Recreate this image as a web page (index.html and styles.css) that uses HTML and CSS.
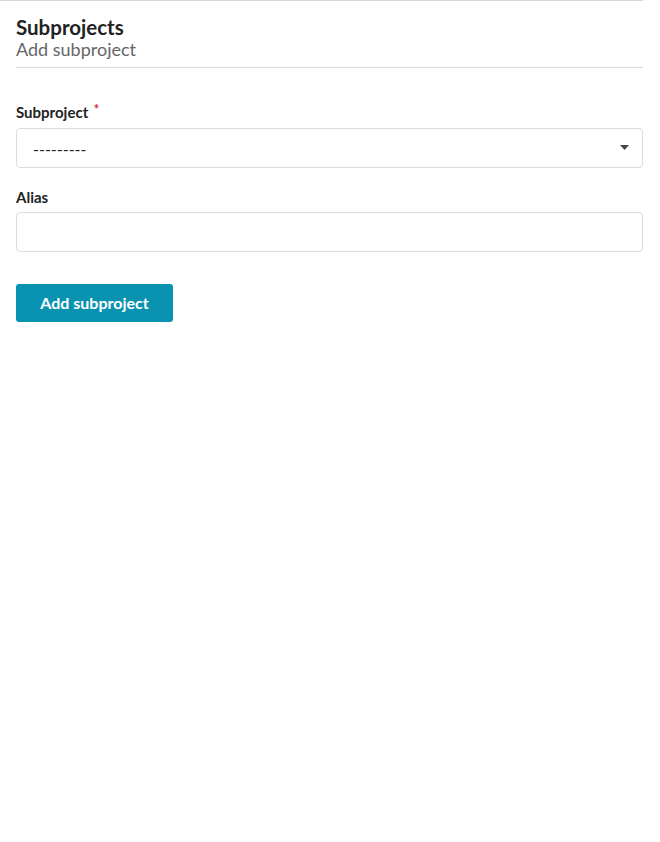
FILE: index.html
```html
<!DOCTYPE html>
<html>
<head>
<meta charset="utf-8">
<link rel="stylesheet" href="styles.css">
</head>
<body>
<div class="page">
  <div class="header">
    <h1 class="title">Subprojects</h1>
    <div class="subtitle">Add subproject</div>
  </div>
  <form class="form">
    <div class="field">
      <label class="label">Subproject <span class="req">*</span></label>
      <div class="select">
        <span class="select-text">---------</span>
        <svg class="caret" width="9" height="5" viewBox="0 0 9 5"><path d="M0 0H9L4.5 5Z" fill="#444"/></svg>
      </div>
    </div>
    <div class="field">
      <label class="label">Alias</label>
      <div class="input"></div>
    </div>
    <button type="button" class="btn">Add subproject</button>
  </form>
</div>
</body>
</html>
```
FILE: styles.css
```css
body {
  margin: 0;
  font-family: Lato, "Noto Sans", sans-serif;
  color: #222;
  background: #fff;
}
.page {
  width: 643px;
  border-top: 1px solid #d8d8d8;
  box-sizing: border-box;
  padding-left: 16px;
}
.header {
  padding-top: 15px;
  padding-bottom: 7px;
  border-bottom: 1px solid #dcdcdc;
}
.title {
  margin: 0;
  font-size: 20.5px;
  font-weight: 700;
  line-height: 22px;
  color: #222;
}
.subtitle {
  font-size: 18px;
  line-height: 22px;
  color: #666;
}
.form {
  padding-top: 33px;
}
.field {
  margin-bottom: 18px;
}
.label {
  display: block;
  font-size: 15px;
  font-weight: 700;
  line-height: 20px;
  padding-top: 1px;
  margin-bottom: 5px;
  color: #222;
}
.req {
  color: #e0262a;
  font-size: 13px;
  position: relative;
  top: -4px;
  margin-left: 2px;
}
.select, .input {
  height: 40px;
  box-sizing: border-box;
  border: 1px solid #dcdcdc;
  border-radius: 4px;
  background: #fff;
}
.select {
  display: flex;
  align-items: center;
  justify-content: space-between;
  padding: 0 13px 0 16px;
}
.select-text {
  font-size: 16px;
  color: #222;
}
.caret {
  margin-top: -1px;
}
.btn {
  margin-top: 14px;
  height: 38px;
  width: 157px;
  border: none;
  border-radius: 3px;
  background: #0a93b0;
  color: #fff;
  font-family: Lato, "Noto Sans", sans-serif;
  font-weight: 700;
  font-size: 16px;
  padding: 0 0 2px;
}
```
